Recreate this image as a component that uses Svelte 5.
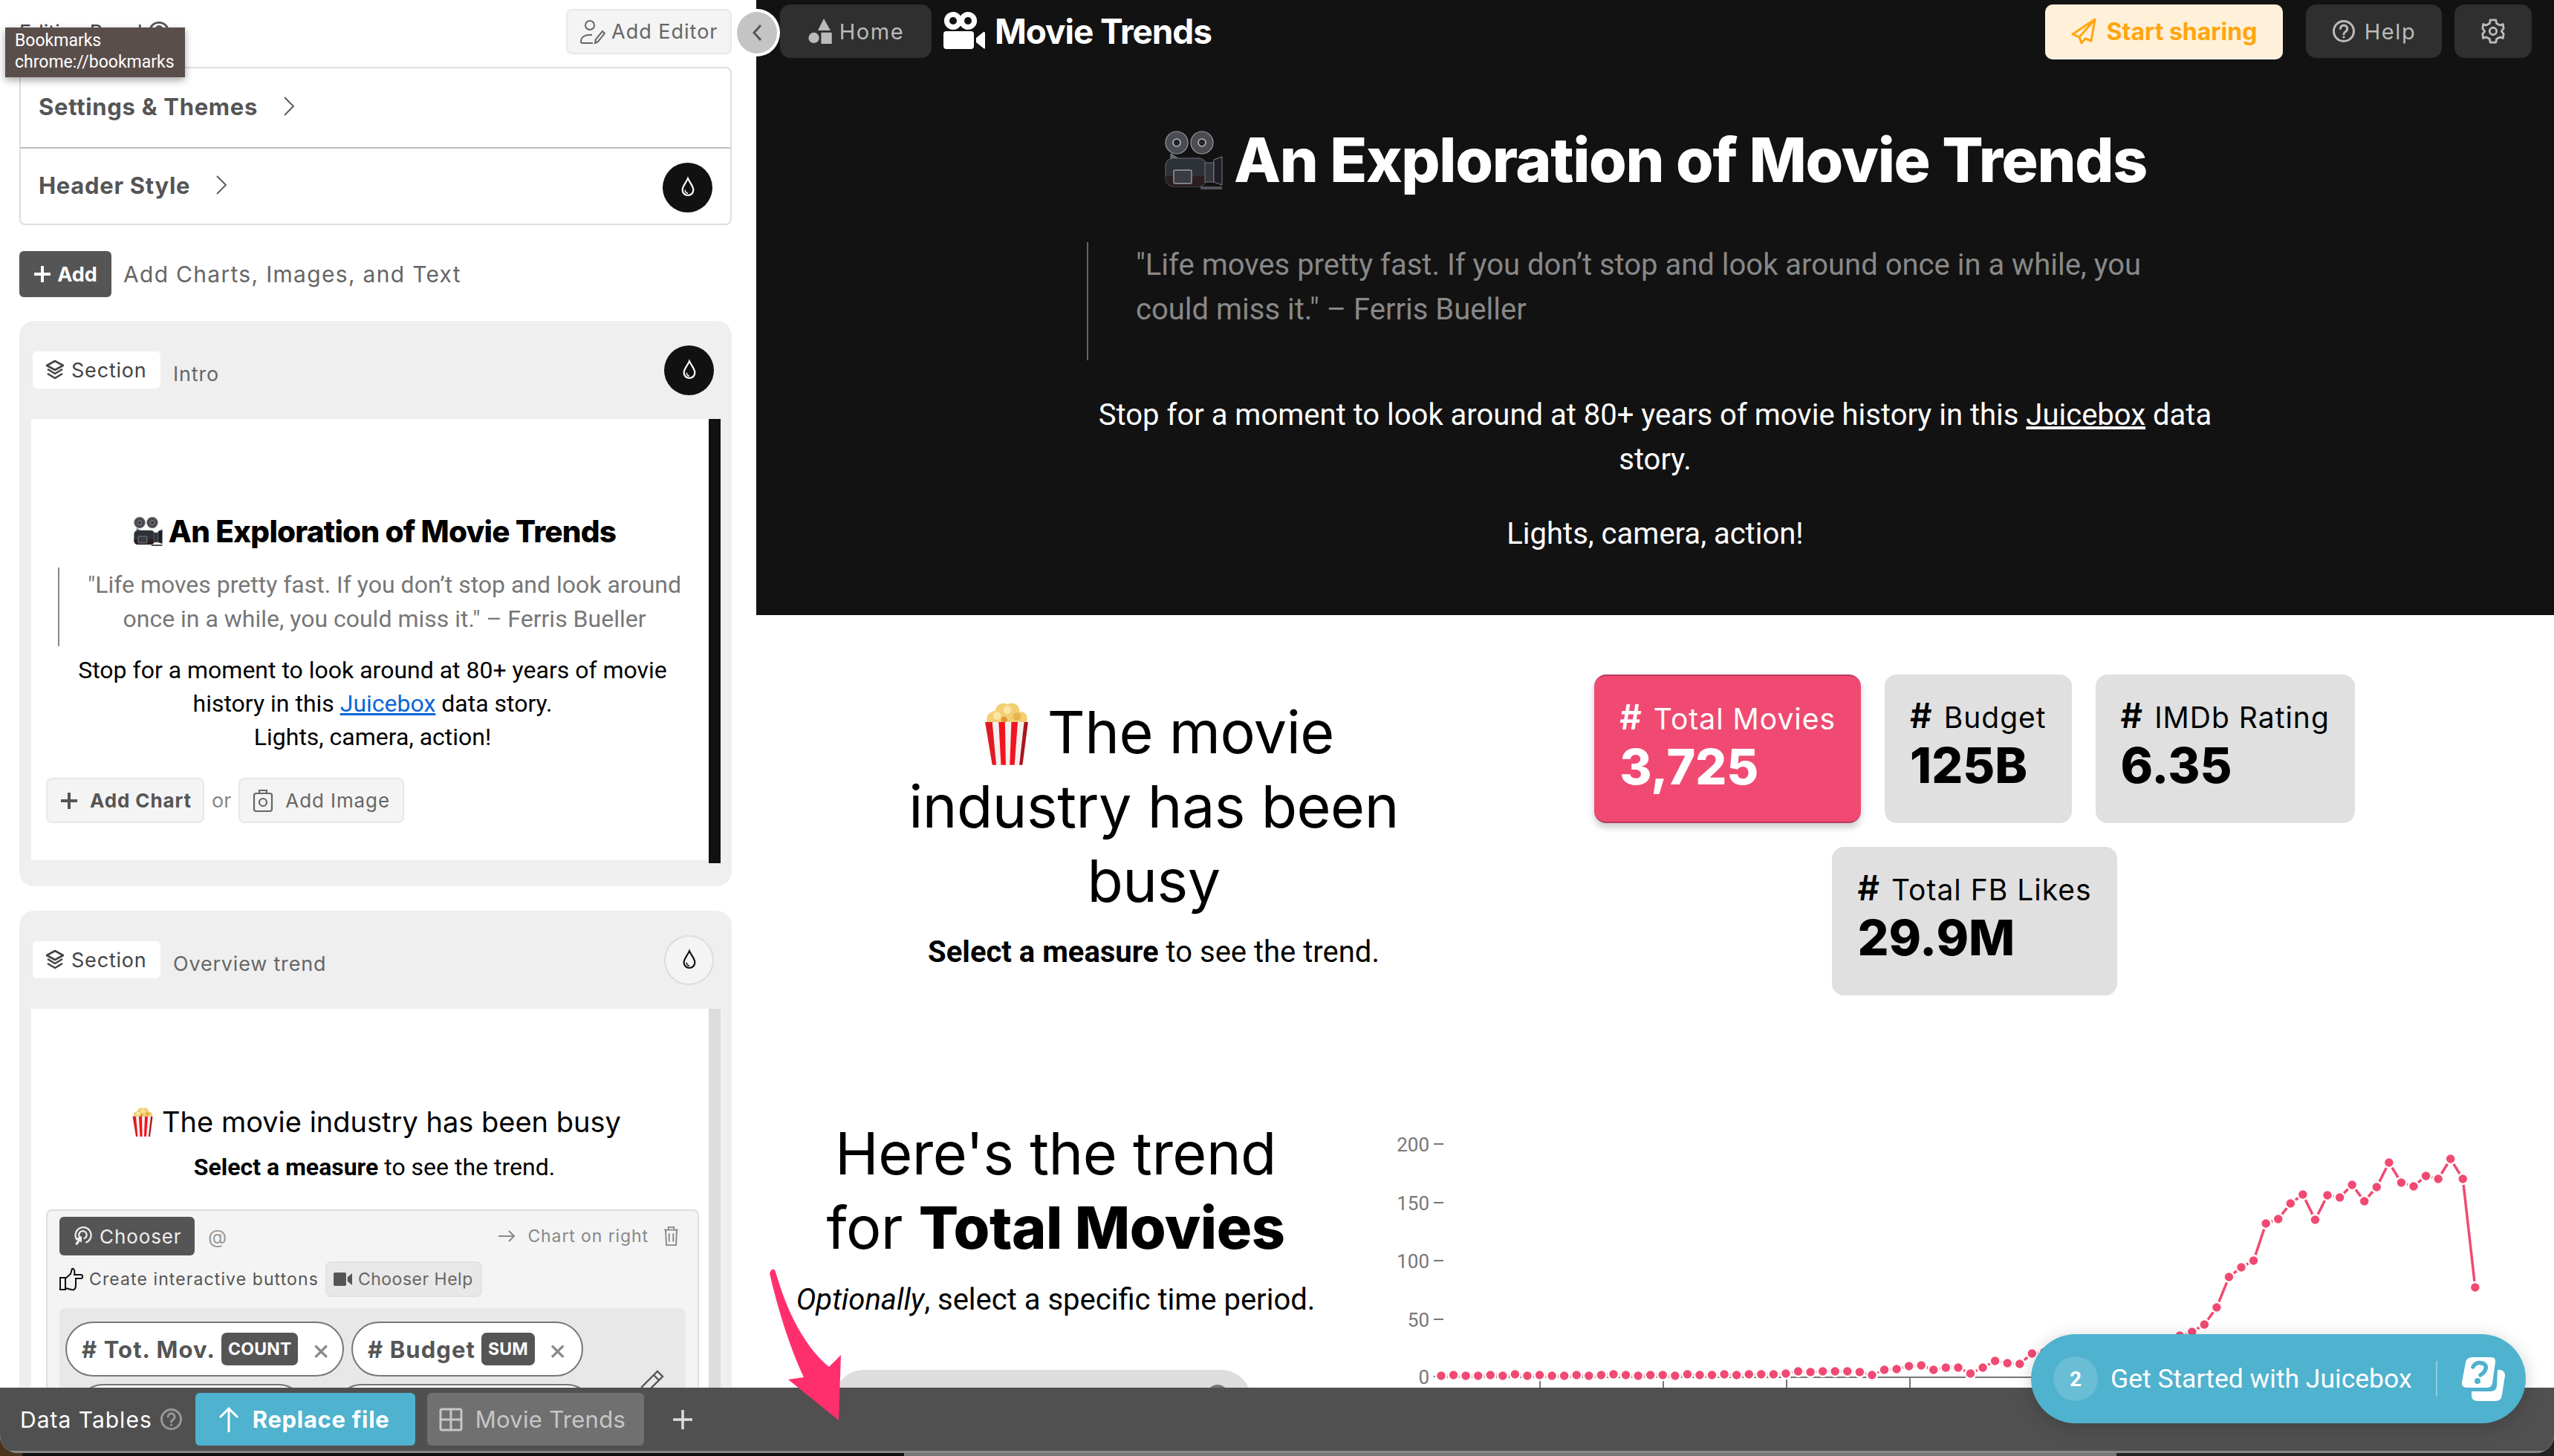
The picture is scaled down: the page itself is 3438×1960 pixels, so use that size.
<script>
  // page coordinates of the trend dots, read off the chart
  const trendY = [
    1852, 1851, 1852, 1852, 1851, 1852, 1850, 1852, 1851, 1852, 1852, 1851, 1852, 1851,
    1850, 1851, 1852, 1851, 1851, 1852, 1850, 1851, 1851, 1850, 1851, 1850, 1850, 1850,
    1849, 1846, 1847, 1846, 1846, 1846, 1847, 1851, 1844, 1843, 1839, 1838, 1844, 1841,
    1841, 1849, 1841, 1832, 1835, 1836, 1822, 1820, 1818, 1820, 1816, 1814, 1812, 1810,
    1808, 1806, 1804, 1802, 1798, 1793, 1783, 1760, 1719, 1706, 1697, 1647, 1641, 1620,
    1608, 1642, 1609, 1612, 1595, 1617, 1598, 1565, 1592, 1597, 1583, 1587, 1560, 1587, 1733
  ];
  const points = trendY.map((y, i) => ({ x: 1940 + i * 16.57, y }));
  const linePoints = points.map((p) => `${p.x},${p.y}`).join(' ');
  const yAxis = [
    { label: '200', y: 1540 },
    { label: '150', y: 1619 },
    { label: '100', y: 1697 },
    { label: '50', y: 1776 },
    { label: '0', y: 1853 }
  ];
  const xTicks = [2073, 2239, 2405, 2571];

  const kpis = [
    { label: 'Total Movies', value: '3,725', active: true },
    { label: 'Budget', value: '125B' },
    { label: 'IMDb Rating', value: '6.35' },
    { label: 'Total FB Likes', value: '29.9M' }
  ];
</script>

{#snippet drop()}
  <svg class="drop-icon" viewBox="0 0 24 32" fill="none" stroke="currentColor" stroke-width="2.4">
    <path d="M12 3 C9 10 4 14 4 20 a8 8 0 0 0 16 0 C20 14 15 10 12 3 Z" />
    <path d="M8 20 a4.5 4.5 0 0 0 4 5" stroke-width="1.6" />
  </svg>
{/snippet}

{#snippet help(cls)}
  <svg class={cls} viewBox="0 0 32 32" fill="none" stroke="currentColor" stroke-width="3">
    <circle cx="16" cy="16" r="13.5" />
    <path d="M11.5 12.5 a4.6 4.6 0 1 1 7 4 c-1.6 1-2.5 1.8-2.5 3.5" stroke-linecap="round" />
    <circle cx="16" cy="24" r="1.6" fill="currentColor" stroke="none" />
  </svg>
{/snippet}

{#snippet camera(cls)}
  <svg class={cls} viewBox="0 0 80 80">
    <circle cx="18" cy="17" r="15" fill="#4a4c52" stroke="#9a9ca2" stroke-width="1.2" />
    <circle cx="52" cy="17" r="15" fill="#4a4c52" stroke="#9a9ca2" stroke-width="1.2" />
    <circle cx="18" cy="17" r="5" fill="#23242a" stroke="#b5b7bc" stroke-width="1.6" />
    <circle cx="52" cy="17" r="5" fill="#23242a" stroke="#b5b7bc" stroke-width="1.6" />
    <path d="M10 32 L30 44 L48 40 L50 52 L10 44 Z" fill="#5d6066" stroke="#8e9096" stroke-width="1" />
    <rect x="3" y="38" width="55" height="38" rx="10" fill="#2d3138" stroke="#6a6d74" stroke-width="1" />
    <path d="M3 62 h55 v4 a10 10 0 0 1 -10 10 h-35 a10 10 0 0 1 -10 -10 z" fill="#2b1e20" />
    <rect x="14" y="54" width="24" height="18" rx="2" fill="#3a3c41" stroke="#9a9ca2" stroke-width="1.4" />
    <rect x="56" y="44" width="12" height="26" fill="#33363c" stroke="#777" stroke-width="1" />
    <path d="M68 40 L79 36 V74 L68 70 Z" fill="#1d1f24" stroke="#7c7f86" stroke-width="1" />
    <path d="M50 76 H79 V80 H50 Z" fill="#50535a" />
  </svg>
{/snippet}

{#snippet popcorn(cls)}
  <svg class={cls} viewBox="0 0 60 84">
    <path d="M6 30 C2 18 12 14 16 14 C16 6 26 2 31 6 C38 1 48 8 46 15 C54 14 59 22 54 30 Z" fill="#f2cf73" />
    <circle cx="18" cy="20" r="5" fill="#fbe6a6" />
    <circle cx="31" cy="13" r="5" fill="#fbe6a6" />
    <circle cx="43" cy="21" r="5" fill="#e9b34c" />
    <circle cx="27" cy="25" r="4" fill="#dd9a36" />
    <path d="M3 28 H57 L50 82 H12 Z" fill="#f4f0ee" />
    <path d="M3 28 H12 L17 82 H12 Z" fill="#e01b24" />
    <path d="M20 28 H28 L29 82 H23 Z" fill="#f3131f" />
    <path d="M36 28 H44 L40 82 H34 Z" fill="#f3131f" />
    <path d="M52 28 H57 L50 82 H46 Z" fill="#a8151d" />
  </svg>
{/snippet}

<div class="screen">
  <div class="window">
    <div class="top">
      <aside class="panel">
        <div class="panel-head">
          <div class="panel-title">
            <span>Editing Panel</span>
            {@render help('panel-help')}
          </div>
          <button class="btn-light editor-btn">
            <svg class="editor-icon" viewBox="0 0 34 34" fill="none" stroke="currentColor" stroke-width="2">
              <circle cx="13" cy="8" r="6" />
              <path d="M17 32 H3 a2 2 0 0 1 -2 -2 c0-6 5-9 12-9 h3" />
              <path d="M24 30 l-4 2 1-5 9-11 3 3 z" />
            </svg>
            Add Editor
          </button>
        </div>

        <div class="settings">
          <div class="settings-row">
            <b>Settings &amp; Themes</b>
            <svg class="chev" viewBox="0 0 16 28" fill="none" stroke="currentColor" stroke-width="1.8"><path d="M2 2 L14 14 L2 26" /></svg>
          </div>
          <div class="settings-row">
            <b>Header Style</b>
            <svg class="chev" viewBox="0 0 16 28" fill="none" stroke="currentColor" stroke-width="1.8"><path d="M2 2 L14 14 L2 26" /></svg>
            <span class="style-dot">{@render drop()}</span>
          </div>
        </div>

        <div class="add-row">
          <button class="add-btn">
            <svg class="plus" viewBox="0 0 24 24" fill="none" stroke="currentColor" stroke-width="4"><path d="M12 1 V23 M1 12 H23" /></svg>
            Add
          </button>
          <span>Add Charts, Images, and Text</span>
        </div>

        <section class="card first">
          <div class="card-head">
            <span class="chip">
              <svg class="layers" viewBox="0 0 28 28" fill="none" stroke="currentColor" stroke-width="2.6" stroke-linejoin="round"><path d="M14 2 L25 8 L14 14 L3 8 Z M4 13 L14 19 L24 13 M4 19 L14 25 L24 19" /></svg>
              Section
            </span>
            <span class="card-name">Intro</span>
            <span class="style-dot">{@render drop()}</span>
          </div>
          <div class="preview">
            <div class="preview-body intro">
              <h3 class="mini-title">{@render camera('mini-cam')} An Exploration of Movie Trends</h3>
              <blockquote class="mini-quote">"Life moves pretty fast. If you don’t stop and look around once in a while, you could miss it." – Ferris Bueller</blockquote>
              <p class="mini-text">Stop for a moment to look around at 80+ years of movie<br />history in this <a href="#top">Juicebox</a> data story.<br />Lights, camera, action!</p>
              <div class="mini-actions">
                <button class="btn-light chart-btn">
                  <svg class="plus dark" viewBox="0 0 24 24" fill="none" stroke="currentColor" stroke-width="4"><path d="M12 1 V23 M1 12 H23" /></svg>
                  Add Chart
                </button>
                <span class="or">or</span>
                <button class="btn-light image-btn">
                  <svg class="camera-line" viewBox="0 0 28 34" fill="none" stroke="currentColor" stroke-width="2.2"><rect x="2" y="7" width="24" height="24" rx="3" /><path d="M9 7 V3 H19 V7" /><circle cx="14" cy="19" r="5" /></svg>
                  Add Image
                </button>
              </div>
            </div>
            <div class="preview-bar dark"></div>
          </div>
        </section>

        <section class="card second">
          <div class="card-head">
            <span class="chip">
              <svg class="layers" viewBox="0 0 28 28" fill="none" stroke="currentColor" stroke-width="2.6" stroke-linejoin="round"><path d="M14 2 L25 8 L14 14 L3 8 Z M4 13 L14 19 L24 13 M4 19 L14 25 L24 19" /></svg>
              Section
            </span>
            <span class="card-name">Overview trend</span>
            <span class="style-dot outline">{@render drop()}</span>
          </div>
          <div class="preview">
            <div class="preview-body">
              <h3 class="mini-title plain">{@render popcorn('mini-pop')} The movie industry has been busy</h3>
              <p class="mini-sub"><b>Select a measure</b> to see the trend.</p>
              <div class="chooser">
                <div class="chooser-top">
                  <span class="chooser-tag">
                    <svg class="target" viewBox="0 0 32 32" fill="none" stroke="currentColor" stroke-width="2.6"><path d="M9 22 A12 12 0 1 1 22 26" /><path d="M13 18 A6 6 0 1 1 19 20" /><path d="M16 16 L16 26 L13 24 L9 30 L6 28 L10 22 L6 20 Z" fill="currentColor" stroke="none" /></svg>
                    Chooser
                  </span>
                  <span class="at">@</span>
                  <span class="chart-pos">
                    <svg class="arrow-right" viewBox="0 0 24 18" fill="none" stroke="currentColor" stroke-width="2"><path d="M1 9 H22 M15 2 L22 9 L15 16" /></svg>
                    Chart on right
                    <svg class="trash" viewBox="0 0 22 30" fill="none" stroke="currentColor" stroke-width="2"><path d="M1 6 H21 M7 6 V2 H15 V6 M3 6 L4 28 H18 L19 6 M8 11 V23 M14 11 V23" /></svg>
                  </span>
                </div>
                <div class="chooser-help">
                  <svg class="thumb" viewBox="0 0 32 32" fill="none" stroke="#111" stroke-width="2"><path d="M1 14 H8 V30 H1 Z M8 15 L15 9 L17 2 C20 1 21 5 20 10 H29 C32 10 32 15 29 15 H22 L22 24 C22 30 19 31 16 30 L8 28" /></svg>
                  <span>Create interactive buttons</span>
                  <span class="help-chip">
                    <svg class="video" viewBox="0 0 28 22" fill="currentColor"><rect x="0" y="1" width="19" height="20" rx="2" /><path d="M21 8 L28 2 V20 L21 14 Z" /></svg>
                    Chooser Help
                  </span>
                </div>
                <div class="measures">
                  <div class="pills">
                    <span class="pill wide"><b># Tot. Mov.</b><em>COUNT</em><i>×</i></span>
                    <span class="pill"><b># Budget</b><em>SUM</em><i>×</i></span>
                  </div>
                  <div class="pills lower">
                    <span class="pill rating"></span>
                    <span class="pill likes"></span>
                  </div>
                  <svg class="pencil" viewBox="0 0 34 34" fill="none" stroke="#555" stroke-width="2.4"><path d="M3 24 L24 3 L31 10 L10 31 L2 32 Z M19 8 L26 15" /></svg>
                </div>
              </div>
            </div>
            <div class="preview-bar"></div>
          </div>
        </section>
      </aside>

      <main class="story">
        <header class="hero">
          <nav class="nav">
            <button class="nav-btn home">
              <svg class="home-icon" viewBox="0 0 36 38" fill="currentColor"><path d="M23 0 L33 18 H14 Z" /><circle cx="8" cy="29" r="8" /><rect x="19" y="21" width="16" height="17" /></svg>
              Home
            </button>
            <svg class="brand-icon" viewBox="0 0 56 50" fill="#fff">
              <path fill-rule="evenodd" d="M13 0 a12 12 0 0 1 10 5.500 a12 12 0 1 1 0 13 A12 12 0 1 1 13 0 Z M13 7 a5 5 0 1 0 0 10 a5 5 0 0 0 0-10 Z M33 7 a5 5 0 1 0 0 10 a5 5 0 0 0 0-10 Z" />
              <rect x="0" y="26" width="41" height="24" rx="4" />
              <path d="M44 35 L54 27 Q56 26 56 29 V48 Q56 51 54 49 L44 41 Z" />
            </svg>
            <span class="brand">Movie Trends</span>
            <div class="nav-right">
              <button class="share">
                <svg class="plane" viewBox="0 0 34 36" fill="none" stroke="currentColor" stroke-width="3" stroke-linejoin="round"><path d="M32 2 L2 22 L11 26 L14 34 L19 28 L27 31 Z M32 2 L11 26" /></svg>
                Start sharing
              </button>
              <button class="nav-btn help-btn">{@render help('nav-help')} Help</button>
              <button class="nav-btn gear-btn" aria-label="Settings">
                <svg class="gear" viewBox="0 0 32 36" fill="none" stroke="currentColor" stroke-width="3" stroke-linejoin="round"><path d="M12 2 H20 L21 7 L26 9.500 L30 8 L31 14 L28 18 L31 22 L30 28 L26 26.500 L21 29 L20 34 H12 L11 29 L6 26.500 L2 28 L1 22 L4 18 L1 14 L2 8 L6 9.500 L11 7 Z" /><circle cx="16" cy="18" r="5" /></svg>
              </button>
            </div>
          </nav>

          <h1 class="hero-title">{@render camera('hero-cam')} An Exploration of Movie Trends</h1>
          <blockquote class="hero-quote">"Life moves pretty fast. If you don’t stop and look around once in a while, you could miss it." – Ferris Bueller</blockquote>
          <p class="hero-text">Stop for a moment to look around at 80+ years of movie history in this <a href="#top">Juicebox</a> data story.</p>
          <p class="hero-text">Lights, camera, action!</p>
        </header>

        <section class="overview">
          <div class="overview-text">
            <h2 class="big-title">{@render popcorn('big-pop')} The movie industry has been busy</h2>
            <p class="lead"><b>Select a measure</b> to see the trend.</p>
          </div>
          <div class="kpis">
            {#each kpis as kpi}
              <div class="kpi" class:active={kpi.active}>
                <div class="kpi-label"><b>#</b> {kpi.label}</div>
                <div class="kpi-value">{kpi.value}</div>
              </div>
            {/each}
          </div>
        </section>

        <section class="trend">
          <div class="trend-text">
            <h2 class="big-title">Here's the trend<br />for <b>Total Movies</b></h2>
            <p class="lead"><i>Optionally</i>, select a specific time period.</p>
            <div class="range"><span class="range-knob"></span></div>
          </div>
          <svg class="chart" viewBox="1850 1502 1588 400">
            {#each yAxis as tick}
              <text class="y-label" x="1924" y={tick.y + 10}>{tick.label}</text>
              <line x1="1930" x2="1943" y1={tick.y} y2={tick.y} stroke="#777" stroke-width="2" />
            {/each}
            <line x1="1945" x2="2740" y1="1854" y2="1854" stroke="#777" stroke-width="2" />
            {#each xTicks as x}
              <line x1={x} x2={x} y1="1854" y2="1868" stroke="#777" stroke-width="2" />
            {/each}
            <polyline points={linePoints} fill="none" stroke="#f04a72" stroke-width="3.500" />
            {#each points as p}
              <circle cx={p.x} cy={p.y} r="7" fill="#f04a72" stroke="#fff" stroke-width="2.500" />
            {/each}
          </svg>
        </section>
      </main>
    </div>

    <footer class="tables">
      <span class="tables-title">Data Tables</span>
      {@render help('tables-help')}
      <button class="replace">
        <svg class="up" viewBox="0 0 28 36" fill="none" stroke="currentColor" stroke-width="3"><path d="M14 35 V3 M2 15 L14 3 L26 15" /></svg>
        Replace file
      </button>
      <button class="tab">
        <svg class="grid-icon" viewBox="0 0 32 32" fill="none" stroke="currentColor" stroke-width="3"><rect x="2" y="2" width="28" height="28" rx="2" /><path d="M16 2 V30 M2 16 H30" /></svg>
        Movie Trends
      </button>
      <svg class="tab-plus" viewBox="0 0 28 28" fill="none" stroke="currentColor" stroke-width="3.500"><path d="M14 1 V27 M1 14 H27" /></svg>
    </footer>
  </div>

  <!-- things floating over the app -->
  <div class="tooltip">Bookmarks<br />chrome://bookmarks</div>
  <button class="collapse" aria-label="Collapse panel">
    <svg viewBox="0 0 14 24" fill="none" stroke="#555" stroke-width="3"><path d="M12 2 L3 12 L12 22" /></svg>
  </button>
  <svg class="callout" viewBox="0 0 110 220" fill="#ff2f6e">
    <path d="M4 4 Q8 0 10 6 C26 62 50 108 82 134 L98 118 L95 206 L27 151 L48 148 C30 110 14 60 2 8 Z" />
  </svg>
  <button class="get-started">
    <span class="step">2</span>
    <span class="gs-label">Get Started with Juicebox</span>
    <span class="gs-sep"></span>
    <svg class="gs-icon" viewBox="0 0 60 60">
      <path d="M16 1 H40 Q47 1 46 8 L42 36 Q41 42 34 42 H8 Q0 42 1 35 L6 8 Q7 1 16 1 Z" fill="#fff" />
      <path d="M49 18 Q59 17 59 26 L55 52 Q54 60 46 60 H22 Q14 60 14 52 V47 H40 Q47 47 48 40 Z" fill="#fff" />
      <path d="M16 14 Q20 7 28 9 Q36 11 32 19 Q30 23 26 25" fill="none" stroke="#4fb2ce" stroke-width="5.500" stroke-linecap="round" />
      <circle cx="22" cy="33" r="4" fill="#4fb2ce" />
    </svg>
  </button>
</div>

<style>
  :global(body) {
    margin: 0;
    background: #1b1b1b;
  }

  .screen {
    position: relative;
    width: 3438px;
    height: 1960px;
    overflow: hidden;
    font-family: Roboto, "Liberation Sans", sans-serif;
    background: linear-gradient(to right, #4a3420 0 30px, #111 30px 1217px, #777 1217px 2849px, #222 2849px);
  }

  button {
    font: inherit;
    cursor: pointer;
    margin: 0;
  }

  .window {
    height: 1956px;
    display: flex;
    flex-direction: column;
    background: #fff;
    border-radius: 0 0 24px 24px;
    overflow: hidden;
  }

  .top {
    height: 1868px;
    flex: none;
    display: flex;
    overflow: hidden;
  }

  /* left panel */
  .panel {
    width: 1018px;
    flex: none;
    box-sizing: border-box;
    padding: 0 33px 0 26px;
    font-family: Inter, "Open Sans", sans-serif;
    color: #555;
  }

  .panel-head {
    height: 90px;
    box-sizing: border-box;
    padding-top: 12px;
    display: flex;
    justify-content: space-between;
    align-items: flex-start;
  }

  .panel-title {
    display: flex;
    align-items: center;
    gap: 8px;
    height: 62px;
    font-size: 27px;
    color: #444;
  }

  :global(.panel-help) {
    width: 30px;
    height: 30px;
    color: #555;
  }

  .btn-light {
    display: inline-flex;
    align-items: center;
    background: #f4f4f4;
    border: 2px solid #e8e8e8;
    border-radius: 8px;
    color: #666;
    box-sizing: border-box;
  }

  .editor-btn {
    width: 223px;
    height: 61px;
    font-size: 27px;
    padding: 0 0 0 17px;
    gap: 8px;
    letter-spacing: 1px;
    white-space: nowrap;
  }

  .editor-icon {
    width: 34px;
    height: 34px;
  }

  .settings {
    height: 213px;
    box-sizing: border-box;
    border: 2px solid #ddd;
    border-radius: 8px;
  }

  .settings-row {
    height: 106px;
    box-sizing: border-box;
    padding: 0 24px 4px;
    display: flex;
    align-items: center;
    gap: 34px;
    font-size: 31px;
    letter-spacing: 0.7px;
  }

  .settings-row b {
    font-weight: 700;
    color: #555;
  }

  .settings-row + .settings-row {
    border-top: 2px solid #bbb;
    padding-bottom: 0;
  }

  .settings-row + .settings-row b,
  .settings-row + .settings-row .chev {
    margin-bottom: 6px;
  }

  .chev {
    width: 16px;
    height: 28px;
    color: #555;
  }

  .style-dot {
    margin-left: auto;
    width: 67px;
    height: 67px;
    flex: none;
    border-radius: 50%;
    background: #111;
    color: #fff;
    display: flex;
    align-items: center;
    justify-content: center;
  }

  .card-head .style-dot {
    margin-right: 9px;
  }

  .style-dot.outline {
    background: #f4f4f4;
    border: 2px solid #ddd;
    box-sizing: border-box;
    color: #111;
  }

  .drop-icon {
    width: 22px;
    height: 30px;
  }

  .add-row {
    margin-top: 35px;
    height: 62px;
    display: flex;
    align-items: center;
    gap: 16px;
    font-size: 30px;
    color: #666;
    letter-spacing: 1.3px;
  }

  .add-btn {
    width: 124px;
    height: 62px;
    border: 0;
    border-radius: 6px;
    background: #555;
    color: #fff;
    font-weight: 700;
    font-size: 27px;
    letter-spacing: 0;
    display: flex;
    align-items: center;
    justify-content: center;
    gap: 8px;
  }

  .plus {
    width: 24px;
    height: 24px;
    color: #fff;
  }

  .plus.dark {
    color: #555;
  }

  .card {
    box-sizing: border-box;
    background: #efefef;
    border-radius: 20px;
    padding: 32px 15px 0 16px;
  }

  .card.first {
    margin-top: 32px;
    height: 761px;
  }

  .card.second {
    margin-top: 33px;
    height: 700px;
  }

  .card-head {
    height: 68px;
    margin-bottom: 32px;
    display: flex;
    align-items: center;
  }

  .chip {
    height: 50px;
    width: 172px;
    margin-left: 2px;
    box-sizing: border-box;
    background: #fff;
    border-radius: 6px;
    padding-left: 16px;
    display: flex;
    align-items: center;
    gap: 8px;
    font-size: 27px;
    letter-spacing: 0.8px;
    color: #444;
  }

  .layers {
    width: 28px;
    height: 30px;
  }

  .card-name {
    margin: 10px 0 0 17px;
    font-size: 27px;
    color: #666;
    letter-spacing: 0.8px;
  }

  .preview {
    display: flex;
  }

  .preview-body {
    width: 912px;
    box-sizing: border-box;
    background: #fff;
    padding-top: 131px;
    color: #000;
  }

  .preview-body.intro {
    height: 594px;
    padding-top: 130px;
  }

  .preview-bar {
    width: 16px;
    flex: none;
    background: #ddd;
  }

  .preview-bar.dark {
    height: 598px;
    background: #111;
  }

  .mini-title {
    margin: 0;
    height: 42px;
    padding-left: 12px;
    display: flex;
    align-items: center;
    justify-content: center;
    gap: 8px;
    font-size: 40.500px;
    font-weight: 800;
    letter-spacing: -0.8px;
    white-space: nowrap;
  }

  .mini-title.plain {
    padding-left: 16px;
    font-weight: 400;
    font-size: 38px;
    gap: 10px;
    letter-spacing: 0;
  }

  :global(.mini-cam) {
    width: 40px;
    height: 40px;
  }

  :global(.mini-pop) {
    width: 32px;
    height: 42px;
  }

  .mini-quote {
    margin: 28px 35px 0 36px;
    padding: 0 0 12px 36px;
    border-left: 2px solid #888;
    height: 106px;
    box-sizing: border-box;
    text-align: center;
    font-family: Roboto, sans-serif;
    font-size: 32px;
    line-height: 46px;
    color: #777;
  }

  .mini-text {
    margin: 10px 0 0;
    padding-left: 7px;
    text-align: center;
    font-family: Roboto, sans-serif;
    font-size: 32px;
    line-height: 45px;
    color: #000;
  }

  .mini-text a {
    color: #0a66d8;
  }

  .mini-actions {
    margin: 32px 0 0 20px;
    display: flex;
    align-items: center;
    gap: 10px;
  }

  .mini-actions .btn-light {
    height: 61px;
    font-size: 26px;
    padding: 0 0 0 17px;
    gap: 16px;
    letter-spacing: 0.9px;
    white-space: nowrap;
  }

  .chart-btn {
    width: 213px;
    font-weight: 700;
    color: #555;
  }

  .image-btn {
    width: 223px;
  }

  .camera-line {
    width: 28px;
    height: 34px;
  }

  .or {
    font-size: 27px;
    color: #888;
  }

  .mini-sub {
    margin: 19px 0 0;
    padding-left: 12px;
    height: 42px;
    text-align: center;
    font-family: Roboto, sans-serif;
    font-size: 32px;
    line-height: 42px;
  }

  .chooser {
    margin: 36px 13px 0 20px;
    box-sizing: border-box;
    height: 300px;
    background: #f4f4f4;
    border: 2px solid #ddd;
    border-radius: 8px;
    padding: 8px 16px;
  }

  .chooser-top {
    height: 52px;
    display: flex;
    align-items: center;
  }

  .chooser-tag {
    width: 182px;
    height: 52px;
    box-sizing: border-box;
    background: #555;
    border-radius: 6px;
    color: #eee;
    font-size: 26px;
    display: flex;
    align-items: center;
    gap: 10px;
    padding-left: 16px;
    letter-spacing: 0.9px;
  }

  .target {
    width: 28px;
    height: 30px;
  }

  .at {
    margin-left: 18px;
    font-size: 26px;
    color: #999;
  }

  .chart-pos {
    margin-left: auto;
    margin-right: 9px;
    display: flex;
    align-items: center;
    gap: 16px;
    font-size: 23px;
    color: #888;
    letter-spacing: 0.9px;
  }

  .arrow-right {
    width: 24px;
    height: 18px;
  }

  .trash {
    width: 21px;
    height: 28px;
    margin-left: 4px;
  }

  .chooser-help {
    margin-top: 8px;
    height: 48px;
    display: flex;
    align-items: center;
    gap: 8px;
    font-size: 23px;
    color: #555;
    letter-spacing: 1.1px;
    white-space: nowrap;
  }

  .thumb {
    width: 32px;
    height: 32px;
  }

  .help-chip {
    width: 211px;
    height: 48px;
    box-sizing: border-box;
    margin-left: 1px;
    background: #e8e8e8;
    border: 2px solid #e2e2e2;
    border-radius: 8px;
    display: flex;
    align-items: center;
    gap: 8px;
    padding-left: 9px;
    color: #666;
    letter-spacing: 0.5px;
  }

  .video {
    width: 25px;
    height: 20px;
    color: #555;
  }

  .measures {
    position: relative;
    margin-top: 15px;
    height: 180px;
    background: #e8e8e8;
    border-radius: 8px;
    padding: 18px 8px;
    box-sizing: border-box;
  }

  .pills {
    display: flex;
    gap: 10px;
  }

  .pills.lower {
    margin-top: 10px;
    padding-left: 14px;
    gap: 38px;
  }

  .pill {
    height: 74px;
    box-sizing: border-box;
    width: 312px;
    background: #fff;
    border: 2px solid #777;
    border-radius: 37px;
    padding-left: 20px;
    display: flex;
    align-items: center;
    font-size: 31px;
    letter-spacing: 1.1px;
    color: #555;
    font-style: normal;
  }

  .pill.wide {
    width: 375px;
  }

  .pill.rating {
    width: 310px;
  }

  .pill.likes {
    width: 350px;
  }

  .pill b {
    font-weight: 700;
    white-space: nowrap;
  }

  .pill em {
    margin-left: 8px;
    background: #555;
    color: #fff;
    font-style: normal;
    font-weight: 700;
    font-size: 23px;
    letter-spacing: 0.2px;
    height: 44px;
    padding: 0 9px;
    border-radius: 7px;
    display: flex;
    align-items: center;
  }

  .pill i {
    margin-left: 18px;
    font-style: normal;
    font-size: 38px;
    color: #888;
  }

  .pencil {
    position: absolute;
    right: 28px;
    top: 82px;
    width: 34px;
    height: 34px;
  }

  /* story */
  .story {
    flex: 1;
    min-width: 0;
    background: #fff;
    color: #000;
    overflow: hidden;
  }

  .hero {
    height: 828px;
    box-sizing: border-box;
    background: #121212;
    color: #fff;
    padding-top: 6px;
  }

  .nav {
    height: 78px;
    display: flex;
    align-items: flex-start;
    padding: 0 30px 0 32px;
  }

  .nav-btn {
    height: 72px;
    border: 0;
    border-radius: 14px;
    background: #2f2f2f;
    color: #bbb;
    display: flex;
    align-items: center;
    justify-content: center;
    font-family: Inter, sans-serif;
    font-size: 29px;
    letter-spacing: 1.600px;
  }

  .home {
    width: 204px;
    gap: 8px;
  }

  .home-icon {
    width: 35px;
    height: 34px;
  }

  .brand-icon {
    width: 56px;
    height: 50px;
    margin: 10px 13px 0 16px;
  }

  .brand {
    font-family: Inter, sans-serif;
    font-size: 46px;
    font-weight: 700;
    line-height: 72px;
    letter-spacing: -1.100px;
  }

  .nav-right {
    margin-left: auto;
    display: flex;
    gap: 32px;
  }

  .share {
    width: 320px;
    height: 74px;
    box-sizing: border-box;
    background: #fff0d9;
    border: 0;
    border-bottom: 2px solid #fff;
    border-radius: 10px;
    color: #ffa60f;
    font-family: Inter, sans-serif;
    font-weight: 700;
    font-size: 32px;
    display: flex;
    align-items: center;
    justify-content: center;
    gap: 14px;
    margin-right: -1px;
    white-space: nowrap;
  }

  .plane {
    width: 34px;
    height: 36px;
  }

  .help-btn {
    width: 183px;
    gap: 12px;
  }

  :global(.nav-help) {
    width: 32px;
    height: 32px;
  }

  .gear-btn {
    width: 104px;
    margin-left: -15px;
  }

  .gear {
    width: 32px;
    height: 34px;
  }

  .hero-title {
    margin: 86px 0 0;
    height: 90px;
    display: flex;
    align-items: center;
    justify-content: center;
    gap: 15px;
    font-family: Inter, sans-serif;
    font-size: 82px;
    font-weight: 800;
    letter-spacing: -1.3px;
    white-space: nowrap;
  }

  :global(.hero-cam) {
    width: 80px;
    height: 80px;
  }

  .hero-quote {
    margin: 66px auto 0;
    width: 1530px;
    box-sizing: border-box;
    padding: 1px 100px 38px 64px;
    border-left: 2px solid #666;
    font-size: 40px;
    line-height: 60px;
    color: #888;
  }

  .hero-text {
    margin: 44px auto 0;
    width: 1530px;
    text-align: center;
    font-size: 40px;
    line-height: 60px;
  }

  .hero-text + .hero-text {
    margin-top: 40px;
  }

  .hero-text a {
    color: inherit;
  }

  .overview {
    padding-top: 80px;
    display: flex;
  }

  .overview-text {
    width: 720px;
    margin-left: 175px;
    padding-top: 27px;
    text-align: center;
  }

  .big-title {
    margin: 0;
    font-family: Inter, sans-serif;
    font-size: 79px;
    font-weight: 400;
    line-height: 100px;
    letter-spacing: -0.5px;
  }

  .big-title b {
    font-weight: 800;
  }

  :global(.big-pop) {
    width: 66px;
    height: 90px;
    vertical-align: -18px;
    margin-left: 12px;
  }

  .lead {
    margin: 17px 0 0;
    font-size: 40px;
    line-height: 60px;
    white-space: nowrap;
  }

  .kpis {
    width: 1116px;
    margin-left: 187px;
    display: flex;
    flex-wrap: wrap;
    justify-content: center;
    gap: 32px;
  }

  .kpi {
    height: 200px;
    box-sizing: border-box;
    padding: 30px 34px 0;
    background: #e0e0e0;
    border-radius: 16px;
    font-family: Inter, sans-serif;
    color: #000;
  }

  .kpi.active {
    background: #f04a72;
    color: #fff;
    border-top: 2px solid #b83a5c;
    border-bottom: 2px solid #b83a5c;
    box-shadow: 0 6px 10px rgba(0, 0, 0, 0.2);
  }

  .kpi-label {
    font-size: 39px;
    letter-spacing: 1px;
    line-height: 50px;
    white-space: nowrap;
  }

  .kpi-label b {
    font-size: 46px;
    font-weight: 600;
    margin-right: 3px;
  }

  .kpi-value {
    margin-top: -3px;
    font-size: 66px;
    line-height: 84px;
    font-weight: 800;
  }

  .trend {
    margin-top: 162px;
    display: flex;
  }

  .trend-text {
    width: 800px;
    margin-left: 3px;
    margin-right: 29px;
    text-align: center;
    flex: none;
  }

  .trend-text .lead {
    margin-top: 18px;
  }

  .range {
    position: relative;
    margin: 64px 0 0 102px;
    width: 561px;
    height: 80px;
    background: #ddd;
    border-radius: 40px;
  }

  .range-knob {
    position: absolute;
    right: 30px;
    top: 20px;
    width: 22px;
    height: 22px;
    border: 4px solid #777;
    border-radius: 50%;
  }

  .chart {
    width: 1588px;
    height: 400px;
    flex: none;
  }

  .y-label {
    font-family: Roboto, sans-serif;
    font-size: 26px;
    fill: #777;
    text-anchor: end;
  }

  /* bottom bar */
  .tables {
    flex: 1;
    background: #505050;
    border-bottom: 3px solid #888;
    display: flex;
    align-items: center;
    padding-left: 27px;
    color: #fff;
    font-family: Inter, sans-serif;
    position: relative;
  }

  .tables-title {
    font-size: 30px;
    letter-spacing: 1px;
  }

  :global(.tables-help) {
    width: 31px;
    height: 31px;
    margin-left: 10px;
    color: #999;
  }

  .replace,
  .tab {
    height: 71px;
    border: 0;
    border-radius: 6px;
    display: flex;
    align-items: center;
    font-size: 31px;
    white-space: nowrap;
  }

  .replace {
    width: 296px;
    margin-left: 17px;
    background: #4fb2ce;
    color: #fff;
    font-weight: 700;
    padding-left: 31px;
    gap: 18px;
    letter-spacing: 0.7px;
  }

  .up {
    width: 28px;
    height: 36px;
  }

  .tab {
    width: 292px;
    margin-left: 16px;
    background: #707070;
    color: #c6c6c6;
    padding-left: 16px;
    gap: 17px;
    letter-spacing: 0.3px;
  }

  .grid-icon {
    width: 32px;
    height: 32px;
    flex: none;
  }

  .tab-plus {
    width: 28px;
    height: 28px;
    margin-left: 38px;
    color: #ddd;
  }

  /* overlays */
  .tooltip {
    position: absolute;
    left: 7px;
    top: 37px;
    width: 242px;
    height: 67px;
    box-sizing: border-box;
    padding: 3px 0 0 13px;
    background: #5a4e4b;
    color: #fff;
    font-family: Roboto, sans-serif;
    font-size: 23px;
    line-height: 29px;
    box-shadow: 0 4px 10px rgba(0, 0, 0, 0.35);
  }

  .collapse {
    position: absolute;
    left: 988px;
    top: 12px;
    width: 62px;
    height: 64px;
    box-sizing: border-box;
    padding: 0;
    background: #c4c4c4;
    border: 4px solid #fff;
    border-radius: 50%;
    display: flex;
    align-items: center;
    justify-content: center;
  }

  .collapse svg {
    width: 14px;
    height: 24px;
  }

  .callout {
    position: absolute;
    left: 1034px;
    top: 1706px;
    width: 110px;
    height: 220px;
  }

  .get-started {
    position: absolute;
    left: 2734px;
    top: 1796px;
    width: 666px;
    height: 120px;
    border: 0;
    border-radius: 60px;
    background: #4fb2ce;
    color: #fff;
    display: flex;
    align-items: center;
    padding: 0 0 0 30px;
    box-sizing: border-box;
    box-shadow: 0 4px 24px rgba(0, 0, 0, 0.18);
    font-family: Roboto, sans-serif;
  }

  .step {
    width: 60px;
    height: 60px;
    border-radius: 50%;
    background: rgba(255, 255, 255, 0.15);
    display: flex;
    align-items: center;
    justify-content: center;
    font-size: 28px;
    font-weight: 700;
    flex: none;
  }

  .gs-label {
    margin-left: 17px;
    font-size: 35.500px;
    white-space: nowrap;
  }

  .gs-sep {
    margin-left: 32px;
    width: 2px;
    height: 48px;
    background: rgba(255, 255, 255, 0.35);
    flex: none;
  }

  .gs-icon {
    width: 60px;
    height: 60px;
    margin-left: 32px;
    flex: none;
  }
</style>
